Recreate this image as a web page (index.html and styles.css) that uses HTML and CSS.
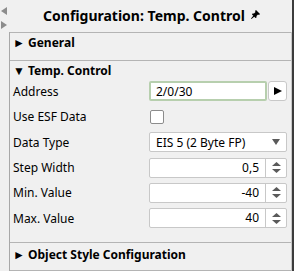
FILE: index.html
```html
<!DOCTYPE html>
<html lang="en">
<head>
    <meta charset="UTF-8">
    <title>Configuration: Temp. Control</title>
    <link rel="stylesheet" href="styles.css">
</head>
<body>
    <div class="window">
        <div class="gutter">
            <svg class="nav-arrow" width="6" height="8" viewBox="0 0 6 8"><polygon points="6,0 6,8 0,4" /></svg>
            <svg class="nav-arrow" width="6" height="8" viewBox="0 0 6 8"><polygon points="0,0 0,8 6,4" /></svg>
        </div>

        <div class="main">
            <div class="title-bar">
                <span class="title">Configuration: Temp. Control</span>
                <svg class="pin" width="9" height="9" viewBox="0 0 9 9">
                    <path d="M5 0 L9 4 L8 5 L7 4.5 L5.5 6 L5.5 7.5 L4.5 8 L1 4.5 L1.5 3.5 L3 3.5 L4.5 2 L4 1 Z M2.5 5.5 L3.5 6.5 L0.5 9 L0 8.5 Z" />
                </svg>
            </div>

            <div class="panel">
                <div class="section section-general">
                    <div class="section-head">&#9658; General</div>
                </div>

                <div class="section">
                    <div class="section-head">&#9660; Temp. Control</div>
                    <div class="rows">
                        <div class="row">
                            <span class="label">Address</span>
                            <div class="control">
                                <input class="text-input address" type="text" value="2/0/30">
                                <button class="go-btn">
                                    <svg width="8" height="8" viewBox="0 0 8 8"><polygon points="0,0 0,8 8,4" /></svg>
                                </button>
                            </div>
                        </div>
                        <div class="row">
                            <span class="label">Use ESF Data</span>
                            <div class="control">
                                <span class="checkbox"></span>
                            </div>
                        </div>
                        <div class="row">
                            <span class="label">Data Type</span>
                            <div class="control">
                                <div class="select">
                                    <span>EIS 5 (2 Byte FP)</span>
                                    <svg width="8" height="6" viewBox="0 0 8 6"><polygon points="0,0 8,0 4,6" /></svg>
                                </div>
                            </div>
                        </div>
                        <div class="row">
                            <span class="label">Step Width</span>
                            <div class="control">
                                <div class="spin">
                                    <span class="spin-value">0,5</span>
                                    <span class="spin-btns">
                                        <svg width="9" height="11" viewBox="0 0 9 11"><polygon points="0,4 9,4 4.5,0" /><polygon points="0,7 9,7 4.5,11" /></svg>
                                    </span>
                                </div>
                            </div>
                        </div>
                        <div class="row">
                            <span class="label">Min. Value</span>
                            <div class="control">
                                <div class="spin">
                                    <span class="spin-value">-40</span>
                                    <span class="spin-btns">
                                        <svg width="9" height="11" viewBox="0 0 9 11"><polygon points="0,4 9,4 4.5,0" /><polygon points="0,7 9,7 4.5,11" /></svg>
                                    </span>
                                </div>
                            </div>
                        </div>
                        <div class="row">
                            <span class="label">Max. Value</span>
                            <div class="control">
                                <div class="spin">
                                    <span class="spin-value">40</span>
                                    <span class="spin-btns">
                                        <svg width="9" height="11" viewBox="0 0 9 11"><polygon points="0,4 9,4 4.5,0" /><polygon points="0,7 9,7 4.5,11" /></svg>
                                    </span>
                                </div>
                            </div>
                        </div>
                    </div>
                </div>

                <div class="section section-last">
                    <div class="section-head">&#9658; Object Style Configuration</div>
                </div>
            </div>
        </div>
    </div>
</body>
</html>
```

FILE: styles.css
```css
body {
    margin: 0;
    padding: 0;
    background: #f0f0f0;
    font-family: 'Noto Sans', sans-serif;
    font-size: 12px;
    color: #000;
}

.window {
    display: flex;
    width: 294px;
    height: 271px;
    overflow: hidden;
    box-sizing: border-box;
    border-right: 2px solid #3c3c3c;
}

.gutter {
    width: 12px;
    display: flex;
    flex-direction: column;
    align-items: center;
    padding-top: 7px;
    gap: 6px;
}

.nav-arrow {
    fill: #8c8c8c;
    margin-left: -2px;
}

.main {
    flex: 1;
    display: flex;
    flex-direction: column;
}

.title-bar {
    height: 32px;
    display: flex;
    align-items: center;
    justify-content: center;
    gap: 6px;
    padding-left: 2px;
    box-sizing: border-box;
}

.title {
    font-weight: bold;
    font-size: 14px;
    margin-top: -1px;
}

.pin {
    fill: #000;
    margin-top: -3px;
}

.panel {
    flex: 1;
    border-left: 1px solid #a8a8a8;
    border-right: 1px solid #c8c8c8;
}

.section {
    border-top: 1px solid #b4b4b4;
}

.section-general {
    height: 27px;
}

.section-last {
    border-bottom: 1px solid #b4b4b4;
    height: 27px;
}

.section-head {
    font-weight: bold;
    padding: 0 0 0 3px;
    line-height: 19px;
}

.section-last .section-head {
    padding-top: 2px;
}

.rows {
    display: flex;
    flex-direction: column;
    margin-top: -1px;
    padding-bottom: 11px;
}

.row {
    display: flex;
    align-items: center;
    height: 25.4px;
}

.label {
    width: 136px;
    padding-left: 3px;
}

.control {
    flex: 1;
    display: flex;
    align-items: center;
    padding-right: 4px;
}

.text-input {
    font-family: inherit;
    font-size: 12px;
    height: 20px;
    box-sizing: border-box;
    width: 118px;
    padding: 0 6px;
    margin: 0;
    background: #fff;
    border: 1px solid #c8c8c8;
    border-radius: 2px;
    outline: none;
}

.address {
    border: 2px solid #b7cfae;
    padding: 0 5px;
}

.go-btn {
    width: 19px;
    height: 20px;
    margin-left: 1px;
    padding: 0;
    background: #fff;
    border: 1px solid #c8c8c8;
    border-radius: 3px;
    display: flex;
    align-items: center;
    justify-content: center;
}

.go-btn svg {
    fill: #000;
}

.checkbox {
    width: 12px;
    height: 12px;
    background: #fff;
    border: 1px solid #8c8c8c;
    border-radius: 2px;
    margin-left: 1px;
}

.select {
    flex: 1;
    height: 20px;
    box-sizing: border-box;
    background: #fff;
    border: 1px solid #c8c8c8;
    border-radius: 2px;
    display: flex;
    align-items: center;
    justify-content: space-between;
    padding: 0 6px 0 6px;
}

.select svg {
    fill: #5a5a5a;
}

.spin {
    flex: 1;
    height: 20px;
    box-sizing: border-box;
    background: #fff;
    border: 1px solid #c8c8c8;
    border-radius: 2px;
    display: flex;
    align-items: stretch;
}

.spin-value {
    flex: 1;
    text-align: right;
    padding-right: 6px;
    line-height: 18px;
    border-right: 1px solid #c8c8c8;
}

.spin-btns {
    width: 20px;
    display: flex;
    align-items: center;
    justify-content: center;
}

.spin-btns svg {
    fill: #5a5a5a;
}
```
